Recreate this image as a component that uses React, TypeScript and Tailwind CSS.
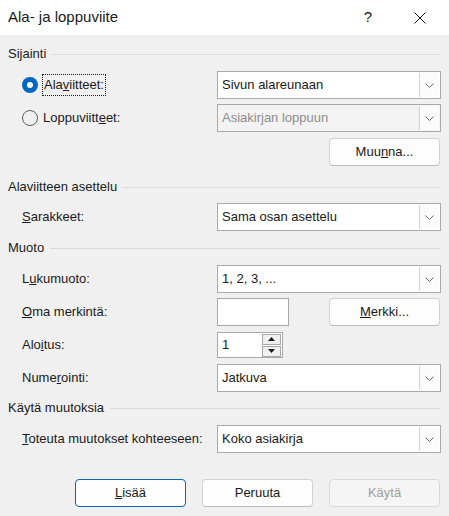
import React from "react";

const font = { fontFamily: '"Liberation Sans", Arial, sans-serif' };

function Chevron() {
  return (
    <svg width="9" height="5" viewBox="0 0 9 5" fill="none">
      <path d="M0.5 0.5 L4.5 4.5 L8.5 0.5" stroke="#6b6b6b" strokeWidth="1" />
    </svg>
  );
}

function Select({ value, disabled }: { value: string; disabled?: boolean }) {
  return (
    <div
      className={`flex h-[28px] w-[224px] items-stretch border border-[#a9a9a9] ${
        disabled ? "bg-[#f3f3f3] text-[#8d8d8d]" : "bg-white text-[#1a1a1a]"
      }`}
    >
      <div className="flex flex-1 items-center pl-[4px]">{value}</div>
      <div className="m-[1px] flex w-[20px] items-center justify-center border-l border-[#d4d4d4] bg-[#fbfbfb]">
        <Chevron />
      </div>
    </div>
  );
}

function Button({
  children,
  primary,
  disabled,
}: {
  children: React.ReactNode;
  primary?: boolean;
  disabled?: boolean;
}) {
  return (
    <div
      className={`flex h-[28px] w-[111px] items-center justify-center rounded-[4px] border ${
        primary
          ? "border-[#0067c0] bg-[#fdfdfd] text-[#1a1a1a]"
          : disabled
          ? "border-[#d9d9d9] bg-[#f5f5f5] text-[#9d9d9d]"
          : "border-[#d1d1d1] border-b-[#bcbcbc] bg-[#fdfdfd] text-[#1a1a1a]"
      }`}
    >
      {children}
    </div>
  );
}

function GroupHeader({ title }: { title: string }) {
  return (
    <div className="flex h-[16px] items-center gap-[6px] text-[#1a1a1a]">
      <span>{title}</span>
      <div className="h-px flex-1 bg-[#dadada]" />
    </div>
  );
}

function Row({ label, children }: { label: React.ReactNode; children: React.ReactNode }) {
  return (
    <div className="flex items-center">
      <div className="w-[209px] shrink-0 pl-[14px] text-[#1a1a1a]">{label}</div>
      {children}
    </div>
  );
}

export default function App() {
  return (
    <div className="h-[516px] w-[449px] overflow-hidden bg-[#f0f0f0] text-[13px]" style={font}>
      {/* title bar */}
      <div className="flex h-[35px] items-center bg-white">
        <span className="pl-[8px] text-[15px] text-[#1a1a1a]">Ala- ja loppuviite</span>
        <span className="ml-auto w-[46px] text-center text-[15px] text-[#1a1a1a]">?</span>
        <div className="flex w-[58px] items-center justify-center">
          <svg width="12" height="12" viewBox="0 0 12 12">
            <path d="M0.5 0.5 L11.5 11.5 M11.5 0.5 L0.5 11.5" stroke="#1a1a1a" strokeWidth="1" />
          </svg>
        </div>
      </div>

      <div className="flex flex-col pl-[8px] pr-[8px] pt-[11px]">
        <GroupHeader title="Sijainti" />

        <div className="mt-[9px] flex items-center">
          <div className="flex w-[209px] items-center pl-[14px]">
            <div className="flex h-[16px] w-[16px] items-center justify-center rounded-full bg-[#0067c0]">
              <div className="h-[6px] w-[6px] rounded-full bg-white" />
            </div>
            <span className="ml-[4px] border border-dotted border-[#1a1a1a] px-px text-[#1a1a1a]">
              Ala<u>v</u>iitteet:
            </span>
          </div>
          <Select value="Sivun alareunaan" />
        </div>

        <div className="mt-[5px] flex items-center">
          <div className="flex w-[209px] items-center pl-[14px]">
            <div className="h-[16px] w-[16px] rounded-full border border-[#5c5c5c]" />
            <span className="ml-[5px] text-[#1a1a1a]">
              Loppuviitt<u>e</u>et:
            </span>
          </div>
          <Select value="Asiakirjan loppuun" disabled />
        </div>

        <div className="mt-[6px] flex justify-end pr-px">
          <Button>
            <span>
              Muu<u>n</u>na...
            </span>
          </Button>
        </div>

        <div className="mt-[13px]">
          <GroupHeader title="Alaviitteen asettelu" />
        </div>

        <div className="mt-[8px]">
          <Row
            label={
              <span>
                <u>S</u>arakkeet:
              </span>
            }
          >
            <Select value="Sama osan asettelu" />
          </Row>
        </div>

        <div className="mt-[9px]">
          <GroupHeader title="Muoto" />
        </div>

        <div className="mt-[9px]">
          <Row
            label={
              <span>
                L<u>u</u>kumuoto:
              </span>
            }
          >
            <Select value="1, 2, 3, ..." />
          </Row>
        </div>

        <div className="mt-[5px]">
          <Row
            label={
              <span>
                <u>O</u>ma merkintä:
              </span>
            }
          >
            <div className="h-[28px] w-[72px] border border-[#a9a9a9] bg-white" />
            <div className="ml-auto pr-px">
              <Button>
                <span>
                  <u>M</u>erkki...
                </span>
              </Button>
            </div>
          </Row>
        </div>

        <div className="mt-[6px]">
          <Row
            label={
              <span>
                Alo<u>i</u>tus:
              </span>
            }
          >
            <div className="flex h-[26px] w-[66px] items-center border border-[#a9a9a9] bg-white">
              <span className="flex-1 pl-[4px] text-[#1a1a1a]">1</span>
              <div className="mr-[1px] flex flex-col gap-px">
                <div className="flex h-[11px] w-[19px] items-center justify-center border border-[#a9a9a9] bg-[#f0f0f0]">
                  <svg width="7" height="4" viewBox="0 0 7 4">
                    <path d="M0 4 L3.5 0 L7 4 Z" fill="#1a1a1a" />
                  </svg>
                </div>
                <div className="flex h-[11px] w-[19px] items-center justify-center border border-[#a9a9a9] bg-[#f0f0f0]">
                  <svg width="7" height="4" viewBox="0 0 7 4">
                    <path d="M0 0 L7 0 L3.5 4 Z" fill="#1a1a1a" />
                  </svg>
                </div>
              </div>
            </div>
          </Row>
        </div>

        <div className="mt-[6px]">
          <Row
            label={
              <span>
                Nume<u>r</u>ointi:
              </span>
            }
          >
            <Select value="Jatkuva" />
          </Row>
        </div>

        <div className="mt-[8px]">
          <GroupHeader title="Käytä muutoksia" />
        </div>

        <div className="mt-[9px]">
          <Row
            label={
              <span>
                <u>T</u>oteuta muutokset kohteeseen:
              </span>
            }
          >
            <Select value="Koko asiakirja" />
          </Row>
        </div>

        <div className="mt-[26px] flex justify-end gap-[16px] pr-px">
          <Button primary>
            <span>
              <u>L</u>isää
            </span>
          </Button>
          <Button>Peruuta</Button>
          <Button disabled>Käytä</Button>
        </div>
      </div>
    </div>
  );
}
